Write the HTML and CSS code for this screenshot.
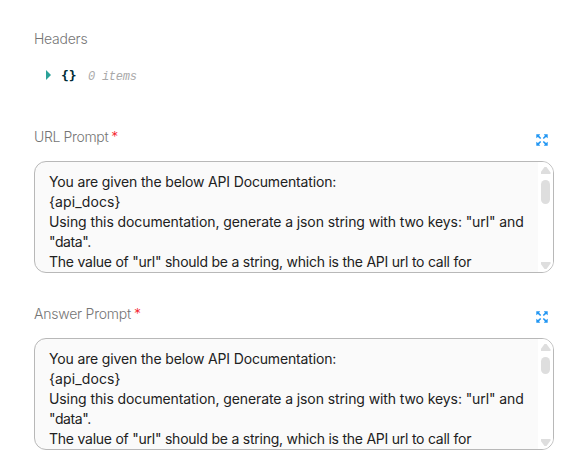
FILE: index.html
```html
<!DOCTYPE html>
<html lang="en">
<head>
<meta charset="utf-8">
<title>API Chain</title>
<link rel="stylesheet" href="styles.css">
</head>
<body>
<svg class="defs" width="0" height="0" aria-hidden="true">
  <symbol id="expand" viewBox="0 0 12 12">
    <path fill="#2196f3" d="M.3.3h3.900L3.100 1.800 5.200 4.100l-1 1L1.900 2.900.3 4.200zM11.700.3v3.900L10.100 2.900 7.800 5.100l-1-1L8.900 1.800 7.800.3zM.3 11.700V7.800l1.600 1.300 2.300-2.200 1 1-2.100 2.300 1.100 1.500zM11.700 11.700H7.800l1.100-1.500-2.100-2.300 1-1 2.300 2.200 1.600-1.300z"/>
  </symbol>
</svg>
<main class="form">
  <section class="field headers">
    <div class="label label-headers">Headers</div>
    <div class="json">
      <span class="caret"></span>
      <span class="braces">{}</span>
      <span class="count">0 items</span>
    </div>
  </section>
  <section class="field prompt">
    <div class="row">
      <div class="label"><span class="label-url">URL Prompt</span><span class="req">*</span></div>
      <svg class="expand"><use href="#expand"/></svg>
    </div>
    <div class="box">
      <div class="text">
        <div class="l1">You are given the below API Documentation:</div>
        <div class="l2">{api_docs}</div>
        <div class="l3">Using this documentation, generate a json string with two keys: "url" and</div>
        <div class="l4">"data".</div>
        <div class="l5">The value of "url" should be a string, which is the API url to call for</div>
      </div>
      <div class="bar"><i class="up"></i><i class="thumb"></i><i class="down"></i></div>
    </div>
  </section>
  <section class="field prompt">
    <div class="row">
      <div class="label"><span class="label-answer">Answer Prompt</span><span class="req">*</span></div>
      <svg class="expand"><use href="#expand"/></svg>
    </div>
    <div class="box">
      <div class="text">
        <div class="l1">You are given the below API Documentation:</div>
        <div class="l2">{api_docs}</div>
        <div class="l3">Using this documentation, generate a json string with two keys: "url" and</div>
        <div class="l4">"data".</div>
        <div class="l5">The value of "url" should be a string, which is the API url to call for</div>
      </div>
      <div class="bar"><i class="up"></i><i class="thumb short"></i><i class="down"></i></div>
    </div>
  </section>
</main>
</body>
</html>
```
FILE: styles.css
```css
* { box-sizing: border-box; }
body {
  margin: 0;
  background: #fff;
  font: 14px/20px Inter, "Liberation Sans", sans-serif;
  color: #212121;
  overflow: hidden;
}
.defs { display: none; }
.form { padding: 29px 32px 0 34px; }
.headers { height: 98px; }
.label { color: #757575; font-weight: 350; white-space: nowrap; }
.label-headers { letter-spacing: -0.25px; }
.label-url { letter-spacing: -0.35px; }
.label-answer { letter-spacing: -0.22px; }
.json {
  display: flex;
  align-items: center;
  height: 20px;
  margin-top: 17px;
  padding-left: 12px;
  font-family: "DejaVu Sans Mono", monospace;
}
.caret {
  border-left: 5px solid #2aa198;
  border-top: 5px solid transparent;
  border-bottom: 5px solid transparent;
  margin-top: -3px;
}
.braces {
  width: 16px;
  margin-left: 10px;
  font-size: 13px;
  font-weight: bold;
  color: #002b36;
}
.count {
  margin: 2px 0 0 11px;
  font-family: "Liberation Mono", monospace;
  font-size: 12px;
  font-style: italic;
  letter-spacing: -0.25px;
  color: #a9a9a9;
}
.prompt { height: 177px; }
.row {
  display: flex;
  justify-content: space-between;
  height: 34px;
}
.req { color: #f5222d; margin-left: 3px; }
.expand { width: 12px; height: 12px; margin: 7px 6px 0 0; }
.box {
  display: flex;
  width: 520px;
  height: 112px;
  border: 1px solid #b8b8b8;
  border-radius: 12px;
  background: #fafafa;
  overflow: hidden;
}
.text { flex: 1; padding: 10px 0 0 14px; white-space: nowrap; }
.l1 { letter-spacing: -0.15px; }
.l2 { letter-spacing: 0.12px; }
.l3 { letter-spacing: -0.095px; }
.l4 { letter-spacing: -0.4px; }
.l5 { letter-spacing: -0.24px; }
.bar {
  display: flex;
  flex-direction: column;
  align-items: center;
  width: 15px;
  padding: 5px 0 3px;
  background: #fff;
}
.up, .down { width: 10px; height: 7px; background: #dedede; }
.up { clip-path: polygon(40% 0, 60% 0, 100% 80%, 100% 100%, 0 100%, 0 80%); }
.down { margin-top: auto; clip-path: polygon(0 0, 100% 0, 100% 20%, 60% 100%, 40% 100%, 0 20%); }
.thumb { width: 9px; height: 24px; margin-top: 6px; border-radius: 5px; background: #dedede; }
.short { height: 17px; }
```
